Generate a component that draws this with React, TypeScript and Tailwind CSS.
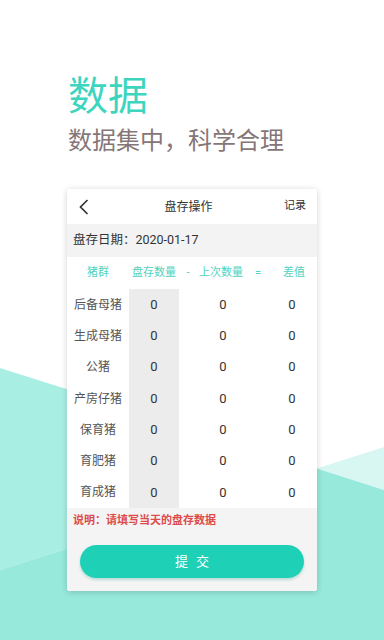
import React from "react";

const FONT = { fontFamily: 'Roboto, "Noto Sans CJK SC", "Noto Sans", sans-serif' };

const ROWS = ["后备母猪", "生成母猪", "公猪", "产房仔猪", "保育猪", "育肥猪", "育成猪"];

const Backdrop = () => (
  <svg className="absolute inset-0 h-full w-full" viewBox="0 0 384 640" preserveAspectRatio="none">
    <polygon points="0,368 316.8,468.6 0,570" fill="#a9eee3" />
    <polygon points="316.8,468.6 384,447 384,490" fill="#d8f7f2" />
    <polygon points="0,570 316.8,468.6 384,490 384,640 0,640" fill="#96e9db" />
  </svg>
);

export default function App() {
  return (
    <div className="relative h-[640px] w-[384px] overflow-hidden bg-white" style={FONT}>
      <Backdrop />
      <div className="relative flex flex-col">
        <div className="pl-[68px] pt-[77px]">
          <div className="text-[40px] leading-none text-[#3ed5bf]">数据</div>
          <div className="mt-[12px] text-[24px] leading-none text-[#867677]">数据集中，科学合理</div>
        </div>

        <div className="ml-[67px] mt-[36px] w-[250px] overflow-hidden rounded-[3px] bg-white shadow-[0_1px_6px_rgba(0,0,0,0.18)]">
          <div className="flex h-[35px] items-center justify-between px-[11px]">
            <svg width="10" height="16" viewBox="0 0 10 16" className="ml-[1px]">
              <polyline points="8.5,1 1.5,8 8.5,15" fill="none" stroke="#333" strokeWidth="1.7" />
            </svg>
            <span className="pl-[4px] text-[12px] text-[#333]">盘存操作</span>
            <span className="text-[11px] text-[#333]">记录</span>
          </div>

          <div className="flex h-[33px] items-center bg-[#f3f3f3] px-[6px] text-[12.5px] text-[#333]">
            盘存日期：2020-01-17
          </div>

          <div className="grid h-[32px] grid-cols-[62px_50px_18px_48px_26px_1fr] items-center text-center text-[11px] text-[#4fd3c0]">
            <span>猪群</span>
            <span>盘存数量</span>
            <span>-</span>
            <span>上次数量</span>
            <span>=</span>
            <span>差值</span>
          </div>

          {ROWS.map((name) => (
            <div key={name} className="grid h-[31.3px] grid-cols-[62px_50px_88px_1fr] items-stretch text-center">
              <span className="flex items-center justify-center text-[12px] text-[#555]">{name}</span>
              <span className="flex items-center justify-center bg-[#ececec] text-[13px] text-[#333]">0</span>
              <span className="flex items-center justify-center text-[13px] text-[#333]">0</span>
              <span className="flex items-center justify-center text-[13px] text-[#333]">0</span>
            </div>
          ))}

          <div className="flex flex-col bg-[#f4f4f4] px-[6px] pb-[13px] pt-[5px]">
            <span className="text-[11px] font-bold leading-[16px] text-[#dd4b4b]">说明：请填写当天的盘存数据</span>
            <button
              type="button"
              className="mx-auto mt-[16px] h-[33px] w-[224px] rounded-full bg-[#1ed0b5] text-[13px] tracking-[0.6em] text-white shadow-[0_2px_3px_rgba(0,150,120,0.25)]"
            >
              <span className="pl-[0.6em]">提交</span>
            </button>
          </div>
        </div>
      </div>
    </div>
  );
}
